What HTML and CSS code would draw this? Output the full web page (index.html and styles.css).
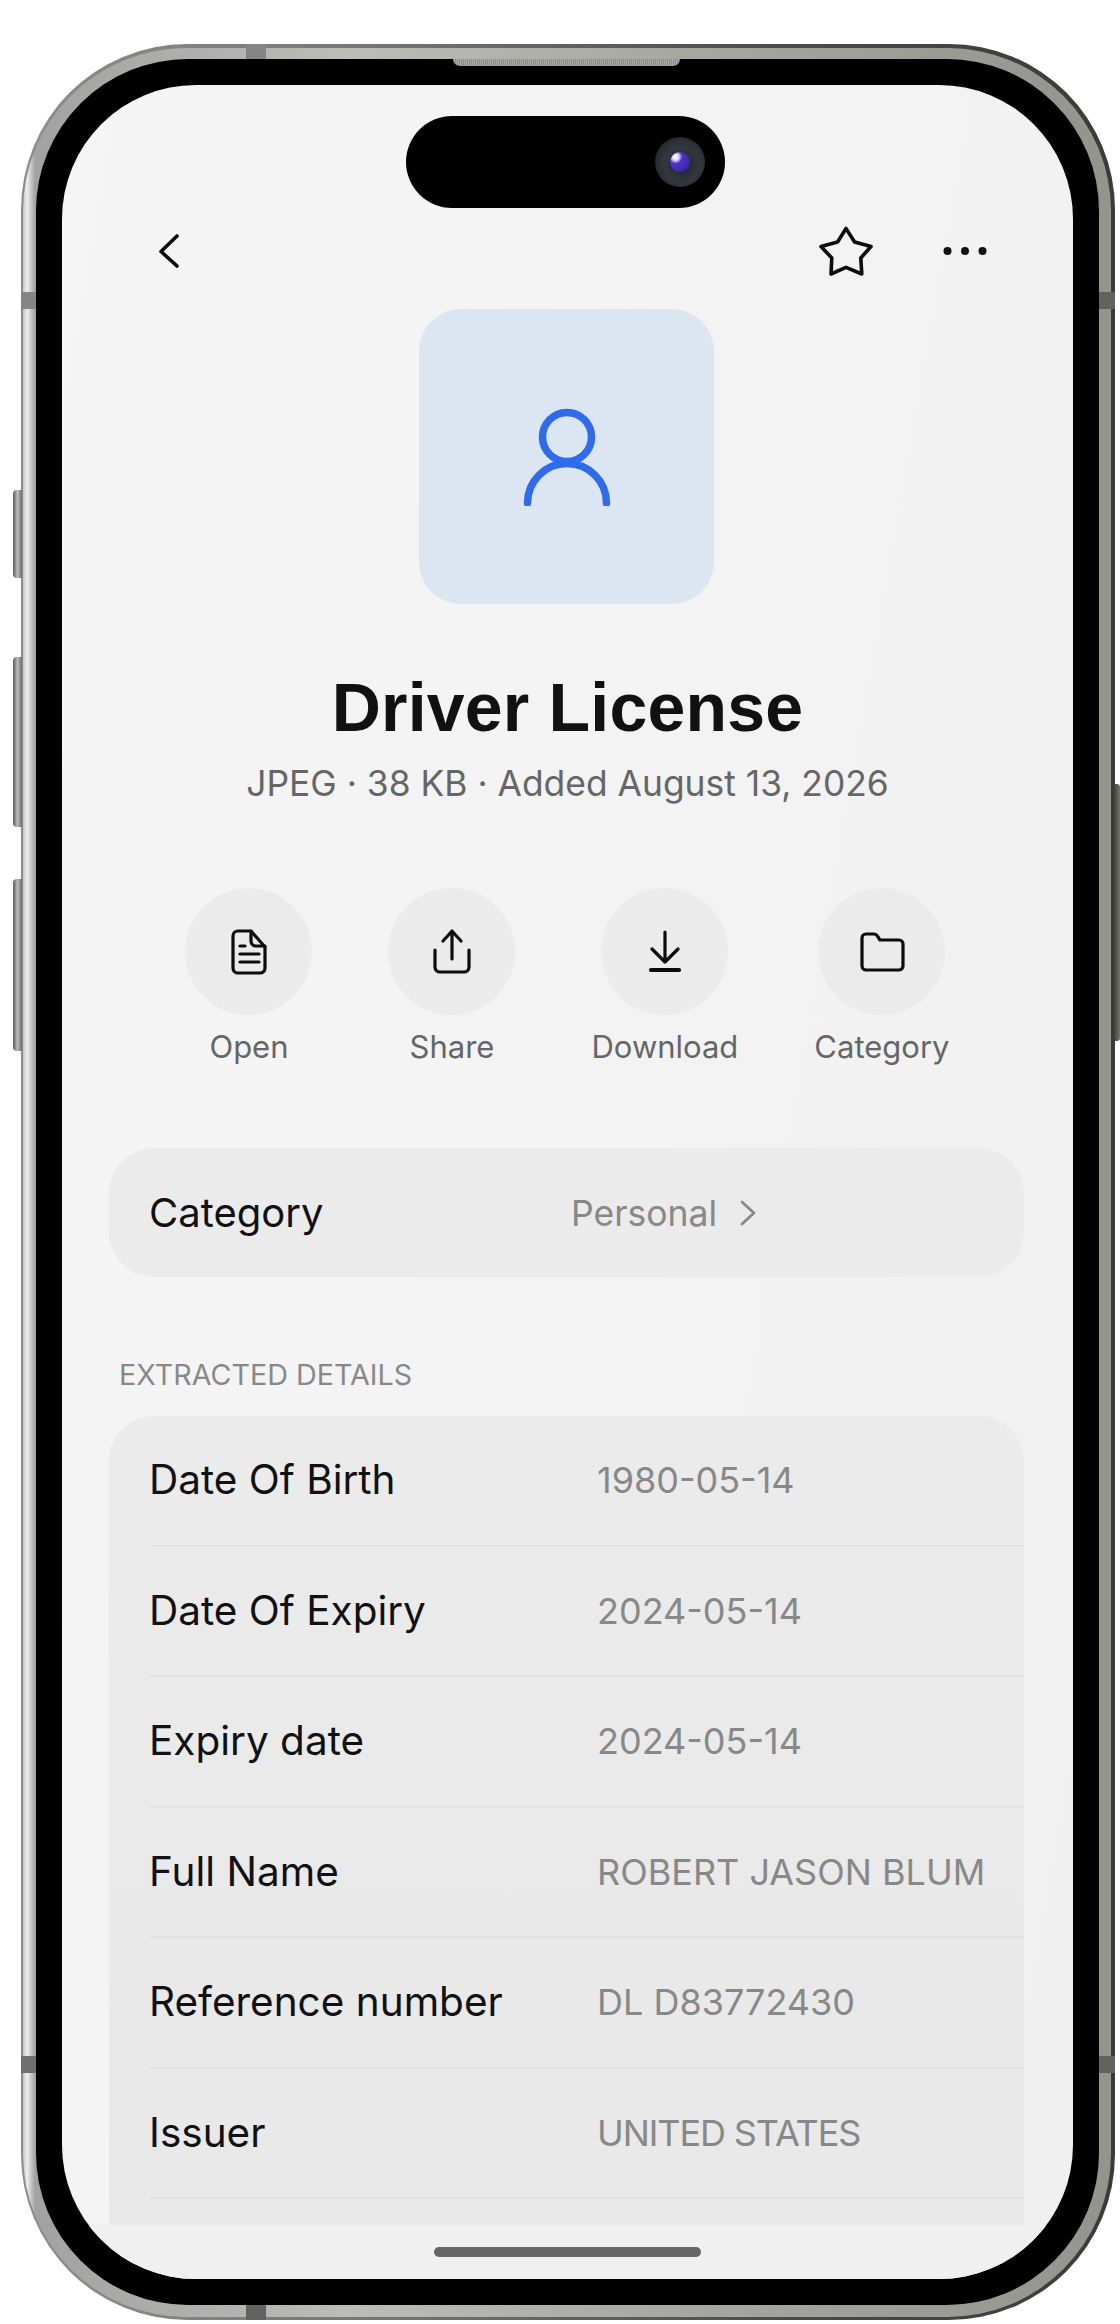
FILE: index.html
```html
<!DOCTYPE html>
<html lang="en">
<head>
<meta charset="utf-8">
<title>Driver License</title>
<link rel="stylesheet" href="styles.css">
</head>
<body>
<div class="device">
  <span class="hw btn-left btn-a"></span>
  <span class="hw btn-left btn-b"></span>
  <span class="hw btn-left btn-c"></span>
  <span class="hw btn-right"></span>
  <span class="hw band band-top"></span>
  <span class="hw band band-bottom"></span>
  <span class="hw band band-lt"></span>
  <span class="hw band band-lb"></span>
  <span class="hw band band-rt"></span>
  <span class="hw band band-rb"></span>
  <div class="rim">
    <span class="speaker"></span>
    <div class="bezel">
      <main class="screen">
        <div class="island"><span class="camera"><span class="lens"></span></span></div>
        <nav class="nav">
          <svg class="ic-back" viewBox="0 0 20 34"><path d="M18 2 2 17.5 18 32"/></svg>
          <div class="nav-right">
            <svg class="ic-star" viewBox="0 0 54 50"><path d="M27 2.5 35.6 16 52 20.5 41.8 32 42.8 48 27 41.3 12 48 12.8 32 2 20.5 18.6 16Z"/></svg>
            <svg class="ic-dots" viewBox="0 0 44 10"><circle cx="4.500" cy="5" r="4"/><circle cx="22" cy="5" r="4"/><circle cx="39.500" cy="5" r="4"/></svg>
          </div>
        </nav>
        <div class="tile">
          <svg class="ic-person" viewBox="0 0 90 98"><circle cx="45" cy="29" r="24.500"/><path d="M5.500 95a39.500 39.500 0 0 1 79 0"/></svg>
        </div>
        <h1 class="title">Driver License</h1>
        <p class="meta">JPEG · 38 KB · Added August 13, 2026</p>
        <div class="actions">
          <div class="action">
            <span class="action-circle"><svg class="ic" viewBox="0 0 48 48"><path d="M13 3h13l14 16v21a5 5 0 0 1-5 5H13a5 5 0 0 1-5-5V8a5 5 0 0 1 5-5z"/><path d="M26 3v10a5 5 0 0 0 5 5h9"/><path d="M15 18h5M15 26h19M15 34h19"/></svg></span>
            <span class="action-label">Open</span>
          </div>
          <div class="action">
            <span class="action-circle"><svg class="ic" viewBox="0 0 48 48"><path d="M24 31V3M15 13l9-10 9 10"/><path d="M7 22v17a5 5 0 0 0 5 5h24a5 5 0 0 0 5-5V22"/></svg></span>
            <span class="action-label">Share</span>
          </div>
          <div class="action">
            <span class="action-circle"><svg class="ic" viewBox="0 0 48 48"><path d="M24 4v30M11 21l13 13 13-13"/><path class="thick" d="M10 42h28"/></svg></span>
            <span class="action-label">Download</span>
          </div>
          <div class="action">
            <span class="action-circle"><svg class="ic" viewBox="0 0 48 48"><path d="M4 10a4 4 0 0 1 4-4h8c2 0 3 1 4 3l2 3h19a4 4 0 0 1 4 4v22a4 4 0 0 1-4 4H8a4 4 0 0 1-4-4z"/></svg></span>
            <span class="action-label">Category</span>
          </div>
        </div>
        <div class="scroll">
          <div class="cat-row">
            <span class="key">Category</span>
            <span class="cat-val">Personal<svg class="ic-chev" viewBox="0 0 18 26"><path d="M3 2l12 11L3 24"/></svg></span>
          </div>
          <h2 class="section">EXTRACTED DETAILS</h2>
          <div class="card">
            <div class="row"><span class="key">Date Of Birth</span><span class="val">1980-05-14</span></div>
            <div class="row"><span class="key">Date Of Expiry</span><span class="val">2024-05-14</span></div>
            <div class="row"><span class="key">Expiry date</span><span class="val">2024-05-14</span></div>
            <div class="row"><span class="key">Full Name</span><span class="val">ROBERT JASON BLUM</span></div>
            <div class="row"><span class="key">Reference number</span><span class="val">DL D83772430</span></div>
            <div class="row"><span class="key">Issuer</span><span class="val val-tight">UNITED STATES</span></div>
            <div class="row"></div>
          </div>
        </div>
        <div class="footer"><span class="home"></span></div>
      </main>
    </div>
  </div>
</div>
</body>
</html>
```
FILE: styles.css
```css
* { box-sizing: border-box; }
html, body { margin: 0; padding: 0; background: #fff; }
body { font-family: Inter, "Liberation Sans", sans-serif; height: 2324px; overflow: hidden; }

.device {
  position: relative;
  isolation: isolate;
  width: 1094px;
  height: 2276px;
  margin: 44px 0 0 21px;
  padding: 4px 4px 3px 2px;
  border-radius: 166px;
  background: linear-gradient(90deg, #8d8d8d 0, #777 30%, #4a4a46 70%, #3a3a36 100%);
}
.rim {
  position: relative;
  height: 100%;
  padding: 11px 12px 12px 13px;
  border-radius: 163px;
  background: linear-gradient(90deg, #c2c2c2 0, #efefef 4px, #d0d0d0 7px, #a2a2a2 12px, #bcbcb8 30%, #a8a8a2 60%, #94948e 100%);
}
.bezel {
  height: 100%;
  padding: 26px;
  border-radius: 152px;
  background: #000;
}
.screen {
  display: flex;
  flex-direction: column;
  align-items: center;
  height: 100%;
  overflow: hidden;
  border-radius: 134px;
  background: linear-gradient(100deg, #f5f5f5 0, #f2f2f2 70%, #f0f0f0 100%);
}

.hw { position: absolute; display: block; }
.btn-left {
  left: -8px;
  width: 9px;
  border-radius: 4px 0 0 4px;
  background: linear-gradient(90deg, #5c5c5c 0, #8a8a8a 25%, #bcbcbc 50%, #6a6a6a 100%);
  z-index: -1;
}
.btn-a { top: 446px; height: 88px; }
.btn-b { top: 613px; height: 170px; }
.btn-c { top: 835px; height: 172px; }
.btn-right {
  right: -5px;
  top: 740px;
  width: 6px;
  height: 257px;
  border-radius: 0 3px 3px 0;
  background: linear-gradient(90deg, #3f3f3c, #75756f);
  z-index: -1;
}
.band { background: #858585; z-index: 2; }
.band-top { left: 225px; top: 0; width: 20px; height: 15px; }
.band-bottom { left: 225px; bottom: 0; width: 20px; height: 15px; background: #62625e; }
.band-lt { left: 0; top: 248px; width: 15px; height: 17px; }
.band-lb { left: 0; top: 2012px; width: 15px; height: 17px; background: #707070; }
.band-rt { right: 0; top: 248px; width: 16px; height: 17px; background: #62625e; }
.band-rb { right: 0; top: 2012px; width: 16px; height: 17px; background: #62625e; }

.speaker {
  position: absolute;
  left: 430px;
  top: 11px;
  width: 227px;
  height: 7px;
  border-radius: 0 0 8px 8px;
  background: repeating-linear-gradient(90deg, #8c8c8c 0 1px, #a8a8a8 1px 2px);
  z-index: 3;
}

.island {
  display: flex;
  flex: none;
  align-items: center;
  justify-content: flex-end;
  width: 319px;
  height: 92px;
  margin: 31px 4px 0 0;
  padding-right: 20px;
  border-radius: 46px;
  background: #000;
}
.camera {
  display: flex;
  align-items: center;
  justify-content: center;
  width: 50px;
  height: 50px;
  border-radius: 50%;
  background: radial-gradient(circle at 55% 55%, #1e2128 0, #33383f 45%, #22262c 80%, #101216 100%);
}
.lens {
  width: 20px;
  height: 20px;
  border-radius: 50%;
  background: radial-gradient(circle at 28% 25%, #fff 0, #dcd8ff 16%, #5030c8 32%, #4226b0 70%, #1d1a50 100%);
}

.nav {
  display: flex;
  flex: none;
  align-items: center;
  justify-content: space-between;
  align-self: stretch;
  height: 50px;
  margin-top: 18px;
  padding: 0 86px 0 97px;
}
.nav-right { display: flex; align-items: center; gap: 70px; }
.ic-back { width: 20px; height: 34px; fill: none; stroke: #0c0c0c; stroke-width: 3.6; stroke-linecap: round; stroke-linejoin: round; }
.ic-star { width: 54px; height: 50px; fill: none; stroke: #0c0c0c; stroke-width: 3.6; stroke-linejoin: round; }
.ic-dots { width: 44px; height: 10px; fill: #111; }

.tile {
  display: flex;
  flex: none;
  align-items: center;
  justify-content: center;
  width: 295px;
  height: 295px;
  margin: 33px 2px 0 0;
  border-radius: 42px;
  background: #dce6f2;
}
.ic-person { width: 90px; height: 98px; fill: none; stroke: #2f6bed; stroke-width: 7.500; stroke-linecap: round; }

.title {
  flex: none;
  margin: 65px 0 0;
  font-family: "Liberation Sans", Arial, sans-serif;
  font-size: 68px;
  line-height: 76px;
  font-weight: 700;
  letter-spacing: 0.2px;
  color: #111;
}
.meta {
  flex: none;
  margin: 19px 0 0;
  font-size: 35.400px;
  line-height: 40px;
  color: #666;
}

.actions {
  display: flex;
  flex: none;
  justify-content: center;
  gap: 76px;
  margin: 84px 0 0;
}
.action { display: flex; flex-direction: column; align-items: center; min-width: 127px; }
.action-circle {
  display: flex;
  align-items: center;
  justify-content: center;
  width: 127px;
  height: 127px;
  border-radius: 50%;
  background: #ebebeb;
}
.ic { width: 48px; height: 48px; fill: none; stroke: #0c0c0c; stroke-width: 3.200; stroke-linecap: round; stroke-linejoin: round; }
.ic .thick { stroke-width: 4.200; }
.action-label {
  margin-top: 14px;
  font-size: 31px;
  line-height: 36px;
  color: #666;
}

.scroll {
  flex: 1;
  min-height: 0;
  align-self: stretch;
  padding: 0 49px 0 47px;
  overflow: hidden;
  margin-top: 83px;
}
.cat-row {
  display: grid;
  grid-template-columns: 422px 1fr;
  align-items: center;
  height: 129px;
  padding: 1px 0 0 40px;
  border-radius: 45px;
  background: #ebebeb;
}
.key { font-size: 40px; line-height: 46px; color: #111; }
.cat-val { display: flex; align-items: center; gap: 22px; font-size: 35.500px; color: #888; }
.ic-chev { width: 18px; height: 26px; fill: none; stroke: #888; stroke-width: 2.800; stroke-linecap: round; stroke-linejoin: round; }
.section {
  margin: 81px 0 0 10px;
  font-size: 28.700px;
  line-height: 34px;
  font-weight: 400;
  color: #888;
}
.card {
  margin-top: 24px;
  padding-left: 40px;
  border-radius: 45px;
  background: linear-gradient(180deg, #ebebeb, #e8e8e8);
}
.row {
  display: grid;
  grid-template-columns: 448px 1fr;
  align-items: center;
  height: 130.500px;
  border-bottom: 2px solid #e2e2e2;
}
.row .key { font-size: 40.500px; }
.val { font-size: 36px; line-height: 42px; color: #888; }
.val-tight { letter-spacing: -1.100px; }

.footer {
  display: flex;
  flex: none;
  align-items: flex-start;
  justify-content: center;
  align-self: stretch;
  height: 54px;
  padding-top: 22px;
  background: #f0f0f0;
}
.home { width: 267px; height: 10px; border-radius: 5px; background: #666; }
```
